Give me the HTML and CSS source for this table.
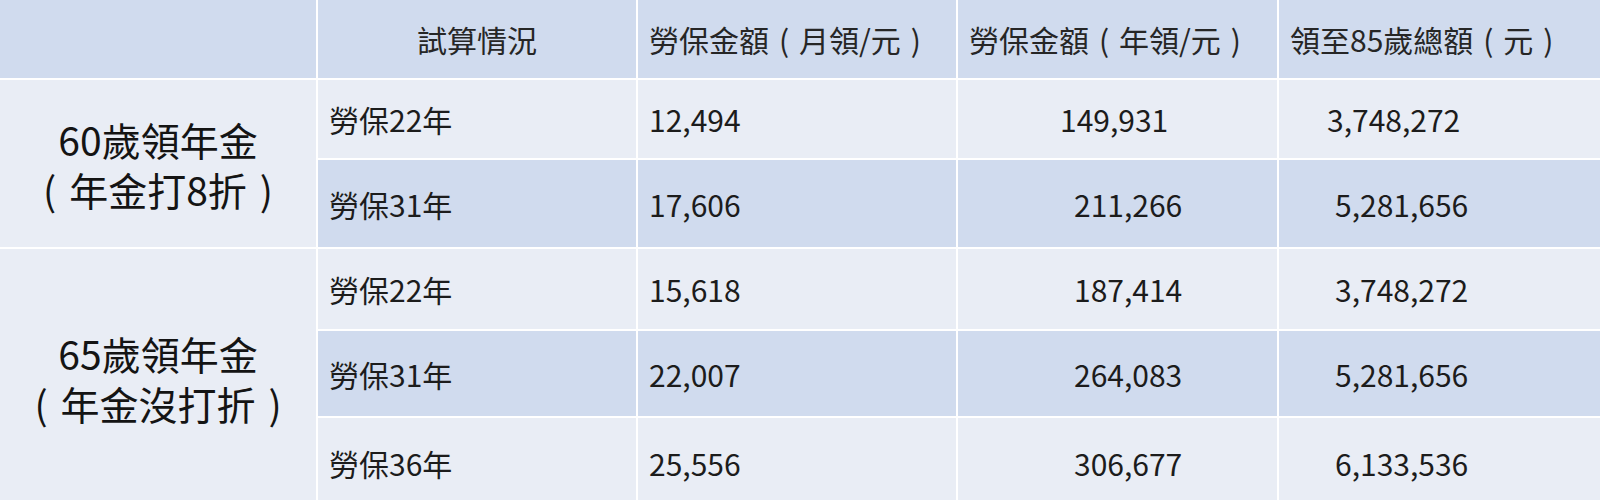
FILE: index.html
```
<!DOCTYPE html>
<html lang="zh-Hant">
<head>
<meta charset="utf-8">
<title>勞保年金試算</title>
<link rel="stylesheet" href="styles.css">
</head>
<body>
<table class="grid">
  <colgroup>
    <col class="w1"><col class="w2"><col class="w3"><col class="w4"><col class="w5">
  </colgroup>
  <thead>
    <tr class="r-head band">
      <th></th>
      <th class="center">試算情況</th>
      <th>勞保金額<span class="paren">(</span>月領/元<span class="paren">)</span></th>
      <th>勞保金額<span class="paren">(</span>年領/元<span class="paren">)</span></th>
      <th>領至85歲總額<span class="paren">(</span>元<span class="paren">)</span></th>
    </tr>
  </thead>
  <tbody>
    <tr class="r1 light">
      <td class="group" rowspan="2"><span class="gline">60歲領年金</span><span class="gline"><span class="paren">(</span>年金打8折<span class="paren">)</span></span></td>
      <td>勞保22年</td>
      <td>12,494</td>
      <td class="yr">149,931</td>
      <td class="tot">3,748,272</td>
    </tr>
    <tr class="r2 band">
      <td>勞保31年</td>
      <td>17,606</td>
      <td class="yr shift">211,266</td>
      <td class="tot shift">5,281,656</td>
    </tr>
    <tr class="r3 light">
      <td class="group" rowspan="3"><span class="gline">65歲領年金</span><span class="gline"><span class="paren">(</span>年金沒打折<span class="paren">)</span></span></td>
      <td>勞保22年</td>
      <td>15,618</td>
      <td class="yr shift">187,414</td>
      <td class="tot shift">3,748,272</td>
    </tr>
    <tr class="r4 band">
      <td>勞保31年</td>
      <td>22,007</td>
      <td class="yr shift">264,083</td>
      <td class="tot shift">5,281,656</td>
    </tr>
    <tr class="r5 light">
      <td>勞保36年</td>
      <td>25,556</td>
      <td class="yr shift">306,677</td>
      <td class="tot shift">6,133,536</td>
    </tr>
  </tbody>
</table>
</body>
</html>
```
FILE: styles.css
```
html, body {
  margin: 0;
  padding: 0;
  background: #ffffff;
  overflow: hidden;
  height: 500px;
}

.grid {
  table-layout: fixed;
  width: 1600px;
  border-collapse: collapse;
  border-style: hidden;
  font-family: "Noto Sans CJK TC", "Noto Sans", sans-serif;
  font-size: 30px;
  color: #1c1c1c;
}

.w1 { width: 317px; }
.w2 { width: 320px; }
.w3 { width: 320px; }
.w4 { width: 321px; }
.w5 { width: 322px; }

.grid th,
.grid td {
  border: 2px solid #ffffff;
  padding: 0 0 0 11px;
  text-align: left;
  vertical-align: middle;
  font-weight: 400;
  white-space: nowrap;
  line-height: 40px;
}

.grid th { color: #262626; }

.band { background: #d0dbee; }
.light { background: #e9edf5; }

.r-head { height: 79px; }
.r1 { height: 80px; }
.r2 { height: 89px; }
.r3 { height: 82px; }
.r4 { height: 87px; }
.r5 { height: 90px; }

.paren {
  display: inline-block;
  width: 1em;
  text-align: center;
}

.grid .center {
  text-align: center;
  padding: 0;
}

.grid .group {
  background: #e9edf5;
  text-align: center;
  padding: 0;
  font-size: 39px;
  line-height: 50px;
  color: #141414;
}

.gline {
  display: block;
  height: 50px;
}

.grid .yr { padding-left: 102px; }
.grid .yr.shift { padding-left: 116px; }
.grid .tot { padding-left: 48px; }
.grid .tot.shift { padding-left: 56px; }
```
